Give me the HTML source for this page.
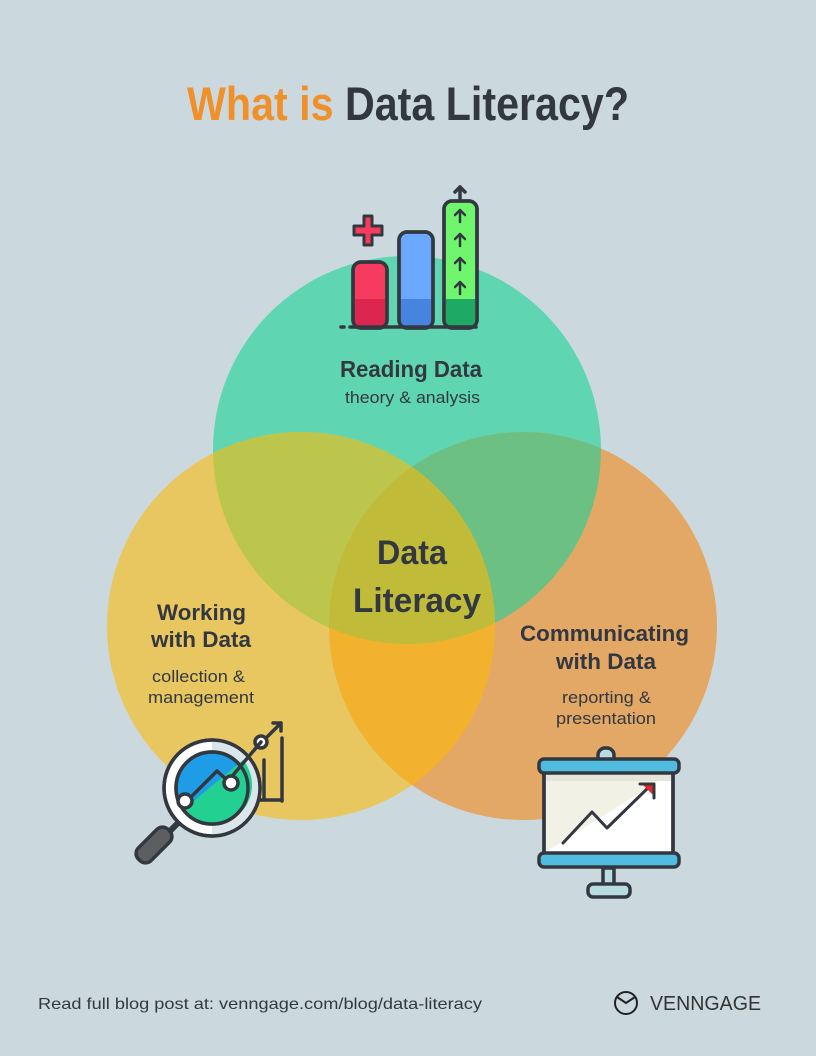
<!DOCTYPE html>
<html><head><meta charset="utf-8"><style>
html,body{margin:0;padding:0;background:#cbd9de;}
svg{display:block}
text{font-family:"Liberation Sans",sans-serif;}
</style></head><body>
<svg width="816" height="1056" viewBox="0 0 816 1056" xmlns="http://www.w3.org/2000/svg">
<defs>
<clipPath id="cg"><circle cx="407" cy="450" r="194"/></clipPath>
<clipPath id="cy"><circle cx="301" cy="626" r="194"/></clipPath>
<clipPath id="co"><circle cx="523" cy="626" r="194"/></clipPath>
</defs>
<rect width="816" height="1056" fill="#cbd9de"/>
<text x="187" y="120" font-size="47" font-weight="bold" textLength="442" lengthAdjust="spacingAndGlyphs"><tspan fill="#f0902a">What is </tspan><tspan fill="#333840">Data Literacy?</tspan></text>

<circle cx="407" cy="450" r="194" fill="#5fd5b2"/>
<circle cx="301" cy="626" r="194" fill="#e8c760"/>
<circle cx="523" cy="626" r="194" fill="#e4a866"/>
<g clip-path="url(#cg)"><circle cx="301" cy="626" r="194" fill="#bcc54c"/><circle cx="523" cy="626" r="194" fill="#6dc084"/></g>
<g clip-path="url(#cy)"><circle cx="523" cy="626" r="194" fill="#f2b22e"/><g clip-path="url(#co)"><circle cx="407" cy="450" r="194" fill="#c0bc3a"/></g></g>

<g fill="#333840" font-weight="bold">
<text x="340" y="377" font-size="23" textLength="142" lengthAdjust="spacingAndGlyphs">Reading Data</text>
<text x="377" y="564" font-size="34" textLength="70" lengthAdjust="spacingAndGlyphs">Data</text>
<text x="353" y="612" font-size="34" textLength="128" lengthAdjust="spacingAndGlyphs">Literacy</text>
<text x="157" y="620" font-size="22" textLength="89" lengthAdjust="spacingAndGlyphs">Working</text>
<text x="151" y="647" font-size="22" textLength="100" lengthAdjust="spacingAndGlyphs">with Data</text>
<text x="520" y="641" font-size="22" textLength="169" lengthAdjust="spacingAndGlyphs">Communicating</text>
<text x="556" y="669" font-size="22" textLength="100" lengthAdjust="spacingAndGlyphs">with Data</text>
</g>
<g fill="#333840" font-size="16.5">
<text x="345" y="403" textLength="135" lengthAdjust="spacingAndGlyphs">theory &amp; analysis</text>
<text x="152" y="682" textLength="93" lengthAdjust="spacingAndGlyphs">collection &amp;</text>
<text x="148" y="703" textLength="106" lengthAdjust="spacingAndGlyphs">management</text>
<text x="562" y="703" textLength="89" lengthAdjust="spacingAndGlyphs">reporting &amp;</text>
<text x="556" y="724" textLength="100" lengthAdjust="spacingAndGlyphs">presentation</text>
</g>

<!-- bar chart -->
<g stroke="#333840" stroke-width="3.5" stroke-linejoin="round" stroke-linecap="round">
<rect x="353" y="262" width="34" height="66" rx="8" fill="#f63b5e"/>
<rect x="355" y="299" width="30" height="27" fill="#dc2650" stroke="none"/>
<rect x="353" y="262" width="34" height="66" rx="8" fill="none"/>
<rect x="399" y="232" width="34" height="96" rx="8" fill="#6aa9ff"/>
<rect x="401" y="299" width="30" height="27" fill="#4684e0" stroke="none"/>
<rect x="399" y="232" width="34" height="96" rx="8" fill="none"/>
<rect x="444" y="201" width="33" height="127" rx="8" fill="#6ff56e"/>
<rect x="446" y="299" width="29" height="27" fill="#1ea965" stroke="none"/>
<rect x="444" y="201" width="33" height="127" rx="8" fill="none"/>
<path d="M364 216 h8 v10 h10 v9 h-10 v10 h-8 v-10 h-10 v-9 h10z" fill="#f63b5e" stroke-width="3"/>
<line x1="341" y1="327" x2="344" y2="327"/>
<line x1="350" y1="327" x2="476" y2="327"/>
<line x1="460" y1="200" x2="460" y2="187"/><path d="M455 192 l5 -5 l5 5" fill="none"/>
<g fill="none" stroke-width="2.5">
<path d="M460 222 v-11 M455 215 l5 -5 l5 5"/><path d="M460 246 v-11 M455 239 l5 -5 l5 5"/>
<path d="M460 270 v-11 M455 263 l5 -5 l5 5"/><path d="M460 294 v-11 M455 287 l5 -5 l5 5"/>
</g>
</g>

<!-- magnifier -->
<g stroke="#333840" stroke-width="3.5" stroke-linecap="round" stroke-linejoin="round">
<path d="M263 741 L281 723 M273 723 h8 v8" fill="none"/>
<line x1="264" y1="760" x2="264" y2="800"/><line x1="282" y1="738" x2="282" y2="801"/><line x1="258" y1="800" x2="282" y2="800"/>
<circle cx="261" cy="742" r="6" fill="#fff"/>
<path d="M178 823 L170 831" stroke-width="6"/>
<rect x="133" y="836" width="42" height="18" rx="8" transform="rotate(-45 154 845)" fill="#5c5f62"/>
<circle cx="212" cy="788" r="48" fill="#fff"/>
<path d="M212 741 a47 47 0 0 1 0 94z" fill="#dbe6ea" stroke="none"/>
<circle cx="212" cy="788" r="48" fill="none"/>
<circle cx="212" cy="788" r="36" fill="#1e9ce6"/>
<path d="M183 810 L243 760 A36 36 0 0 1 183 810z" fill="#22d192" stroke="none"/>
<circle cx="212" cy="788" r="36" fill="none"/>
<path d="M186 802 L217 771 L228 781 L261 742" fill="none"/>
<circle cx="185" cy="801" r="7" fill="#fff"/>
<circle cx="231" cy="783" r="7" fill="#fff"/>
</g>

<!-- presentation -->
<g stroke="#333840" stroke-width="3.5" stroke-linejoin="round" stroke-linecap="round">
<rect x="544" y="771" width="129" height="83" fill="#fff"/>
<path d="M546 852 V773 H671z" fill="#f1f1e6" stroke="none"/>
<path d="M546 773 H671 V781 H546z" fill="#e4e4da" stroke="none"/>
<rect x="544" y="771" width="129" height="83" fill="none"/>
<rect x="598" y="748" width="16" height="20" rx="7" fill="#b8dce0"/>
<rect x="539" y="759" width="140" height="14" rx="5" fill="#4fbce0"/>
<rect x="539" y="853" width="140" height="14" rx="5" fill="#4fbce0"/>
<rect x="603" y="868" width="11" height="17" fill="#b8dce0"/>
<rect x="588" y="884" width="42" height="13" rx="5" fill="#b8dce0"/>
<path d="M563 843 L592 812 L607 828 L651 785" fill="none" stroke-width="3"/>
<path d="M642 784 h12 v12z" fill="#e8262f" stroke="none"/>
<path d="M640 784 h14 v14" fill="none" stroke-width="3"/>
</g>

<text x="38" y="1009" font-size="16" fill="#333840" textLength="444" lengthAdjust="spacingAndGlyphs">Read full blog post at: venngage.com/blog/data-literacy</text>
<circle cx="626" cy="1003" r="11" fill="none" stroke="#222" stroke-width="2"/>
<path d="M617 997 L626 1003 L635 997" fill="none" stroke="#222" stroke-width="2"/>
<text x="650" y="1010" font-size="20" fill="#333" textLength="111" lengthAdjust="spacingAndGlyphs">VENNGAGE</text>
</svg>
</body></html>
